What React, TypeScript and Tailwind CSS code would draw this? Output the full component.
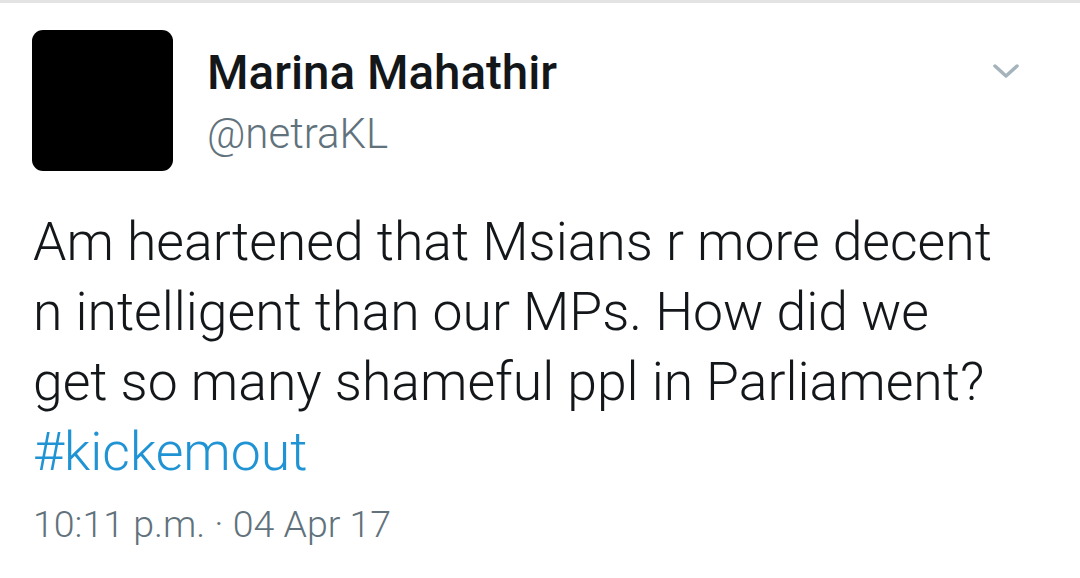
import React from "react";

export default function App() {
  return (
    <div className="w-[1080px] h-[578px] bg-white overflow-hidden" style={{ fontFamily: "Roboto, 'Liberation Sans', sans-serif" }}>
      <div className="h-[3px] bg-[#e3e3e3]" />
      <div className="flex pl-[32px] pt-[27px] pr-[60px]">
        <div className="w-[141px] h-[141px] rounded-[11px] bg-black shrink-0" />
        <div className="flex flex-col ml-[34px] flex-1">
          <div className="text-[47.5px] font-medium text-[#14171a] leading-[47.5px] mt-[20px]">Marina Mahathir</div>
          <div className="text-[42px] font-light text-[#61727c] leading-[42px] mt-[15px]">@netraKL</div>
        </div>
        <div className="pt-[33px] pl-[2px]">
          <svg width="28" height="16" viewBox="0 0 28 16" fill="none">
            <path d="M3 3 L14 13 L25 3" stroke="#a5b4bc" strokeWidth="3.5" strokeLinecap="round" strokeLinejoin="round" />
          </svg>
        </div>
      </div>
      <div className="pl-[33px] pt-[36px] text-[53.5px] font-light text-[#14171a] leading-[70px] w-[1060px]">
        <div>Am heartened that Msians r more decent</div>
        <div>n intelligent than our MPs. How did we</div>
        <div>get so many shameful ppl in Parliament?</div>
        <div className="text-[#1f93d3]">#kickemout</div>
      </div>
      <div className="pl-[33px] mt-[19px] text-[37.5px] font-light text-[#61727c] leading-[37.5px]">10:11 p.m. · 04 Apr 17</div>
    </div>
  );
}
